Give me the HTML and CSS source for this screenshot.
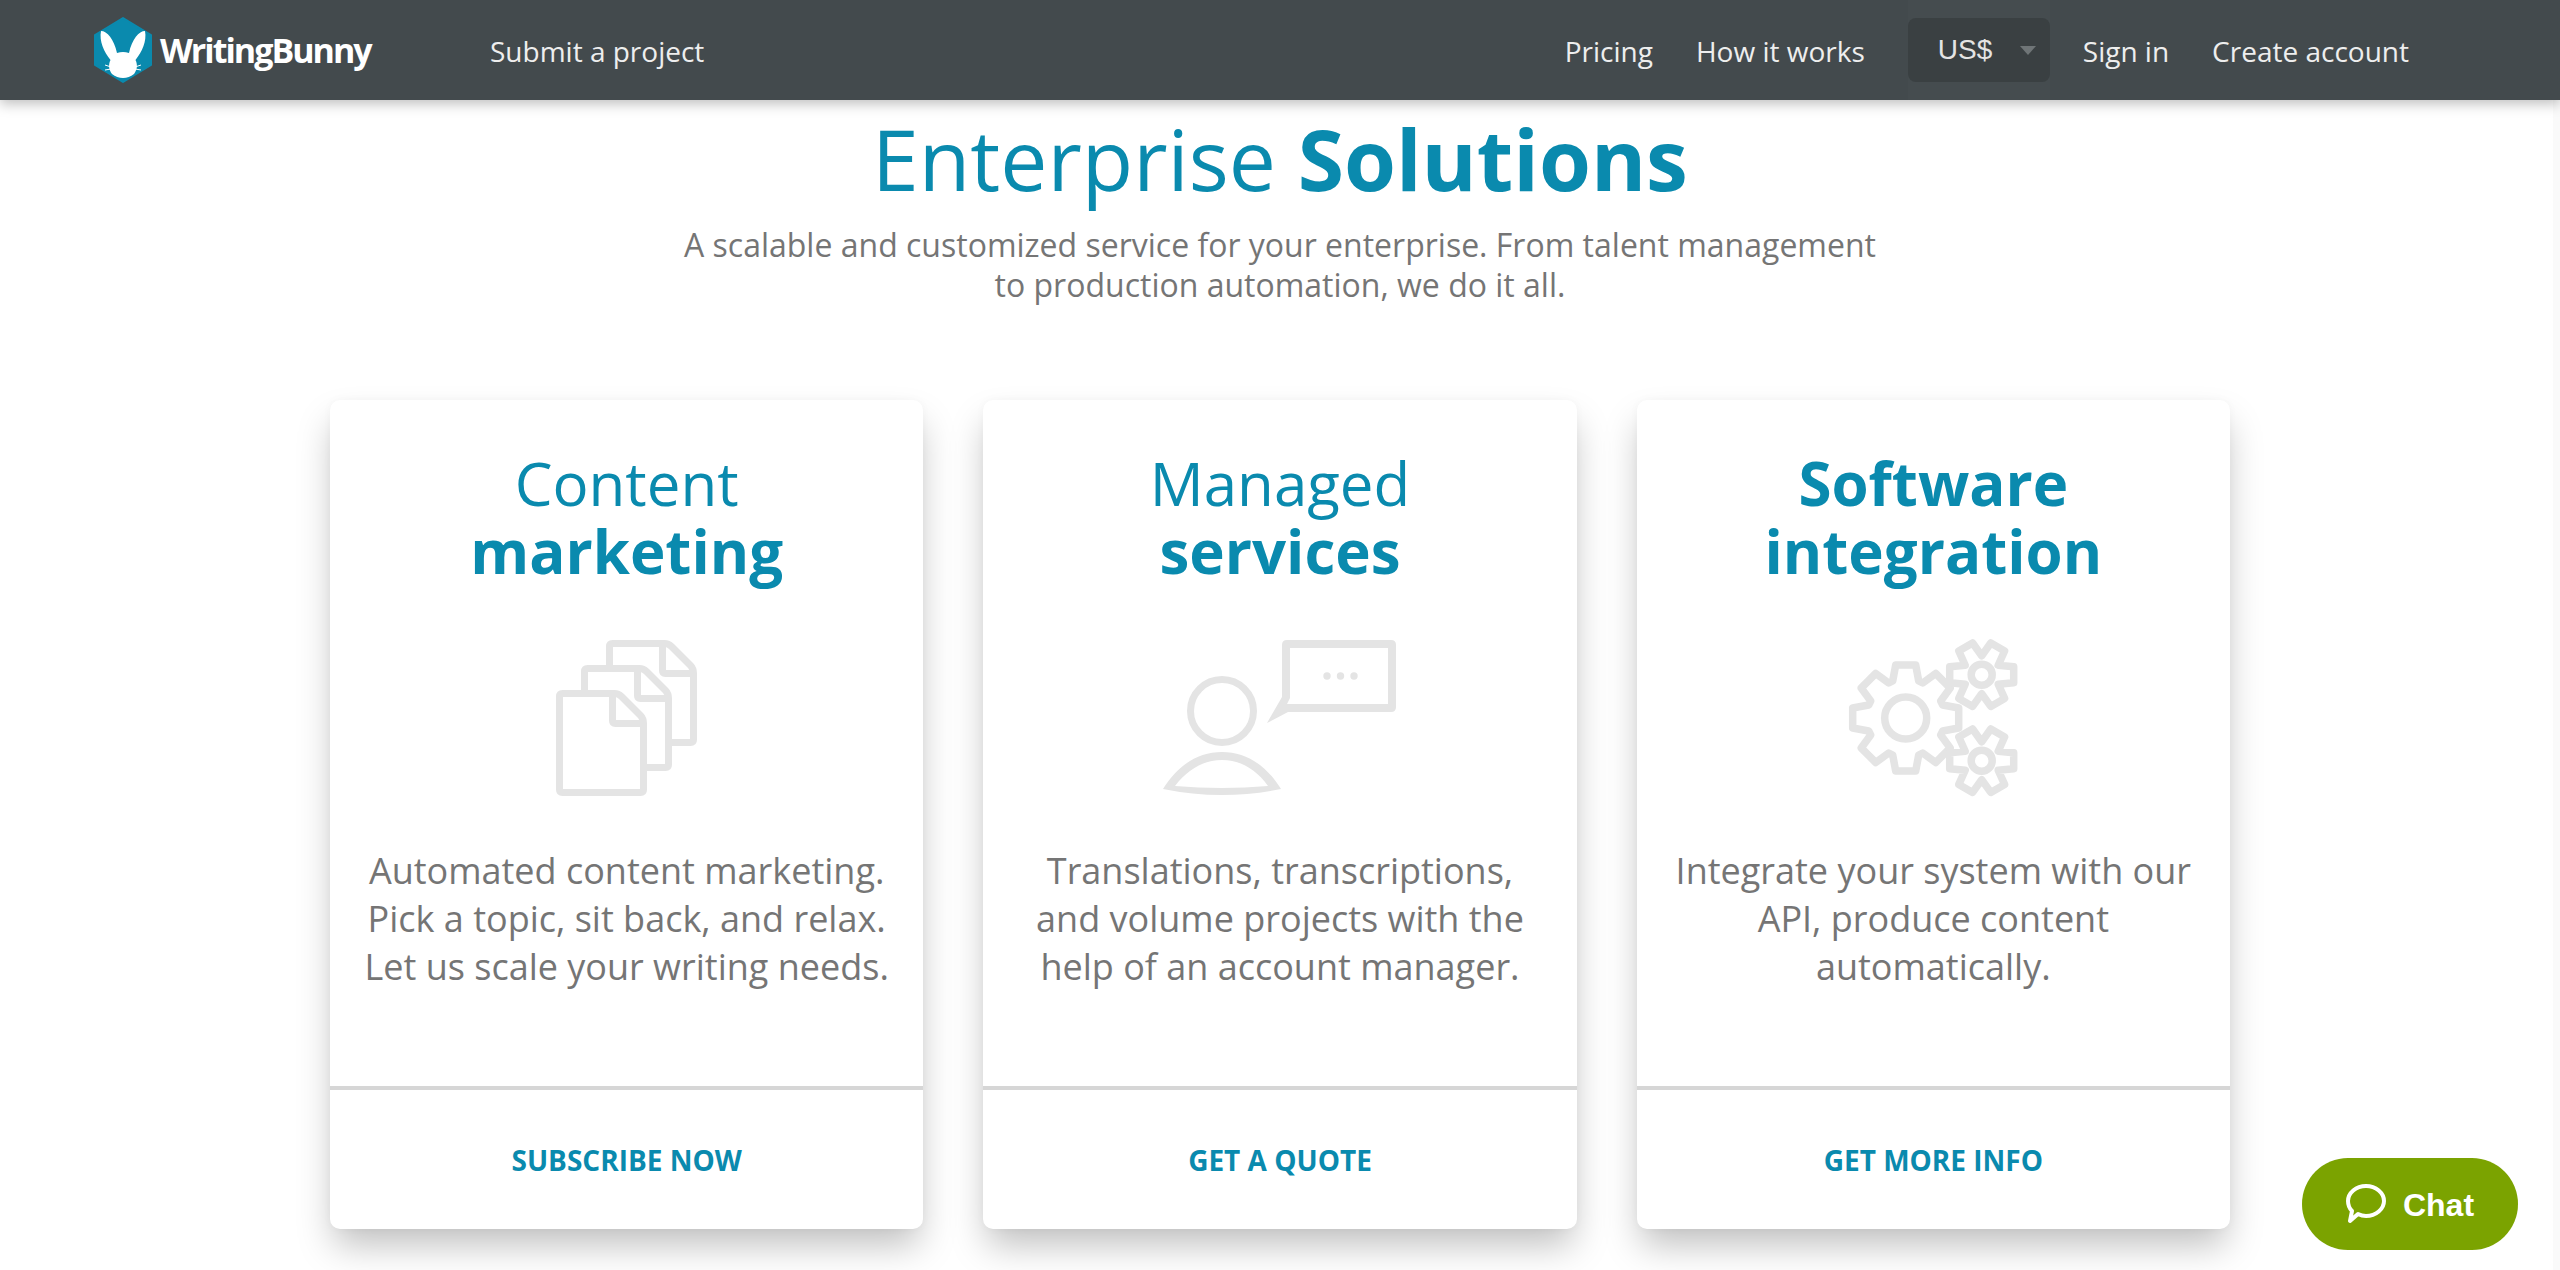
FILE: index.html

```html
<!DOCTYPE html>
<html lang="en">
<head>
  <meta charset="UTF-8" />
  <title>WritingBunny - Enterprise Solutions</title>
  <link rel="stylesheet" href="styles.css">
</head>
<body>
  <header class="topbar">
    <a class="logo" href="#">
      <svg class="logo-mark" viewBox="0 0 58 66" width="58" height="66">
        <path fill="#0a8aae" stroke="#0a8aae" stroke-width="2" stroke-linejoin="round" d="M29 1 L57 18 V48 L29 65 L1 48 V18 Z"/>
        <path fill="#fff" d="M7 14 C13 14 20 22 23 36 Q29 34 35 36 C38 22 45 14 51 14 C53 24 48 35 41.5 43 C44 48 43 53 40 57 Q35 61 29 61 Q23 61 18 57 C15 53 14 48 16.5 43 C10 35 5 24 7 14 Z"/>
        <path fill="none" stroke="#fff" stroke-width="1" d="M11 48 L17 50 M11 53 L17 52 M47 48 L41 50 M47 53 L41 52"/>
      </svg>
      <span class="logo-text">WritingBunny</span>
    </a>
    <a class="nav-link" href="#">Submit a project</a>
    <nav class="nav-right">
      <a class="nav-link" href="#">Pricing</a>
      <a class="nav-link" href="#">How it works</a>
      <div class="currency-col">
        <div class="currency">
          <span>US$</span>
          <i class="caret"></i>
        </div>
      </div>
      <a class="nav-link" href="#">Sign in</a>
      <a class="nav-link" href="#">Create account</a>
    </nav>
  </header>

  <main class="content">
    <h1 class="page-title">Enterprise <b>Solutions</b></h1>
    <p class="page-sub">A scalable and customized service for your enterprise. From talent management<br>to production automation, we do it all.</p>

    <section class="cards">
      <article class="card">
        <div class="card-body">
          <h2 class="card-title">Content<br><b>marketing</b></h2>
          <svg class="card-icon" viewBox="0 0 260 160" width="260" height="160">
            <defs>
              <g id="page">
                <path fill="#fff" d="M3 0 H55 Q59 0 62 3 L81 22 Q84 25 84 30 V96 Q84 99 81 99 H3 Q0 99 0 96 V3 Q0 0 3 0 Z"/>
                <path fill="none" d="M53 0 V27 Q53 30 56 30 H84"/>
              </g>
            </defs>
            <g stroke="#e4e4e4" stroke-width="7" stroke-linejoin="round">
              <use href="#page" x="112.5" y="5.5"/>
              <use href="#page" x="87.5" y="30.5"/>
              <use href="#page" x="62.5" y="55.5"/>
            </g>
          </svg>
          <p class="card-text">Automated content marketing.<br>Pick a topic, sit back, and relax.<br>Let us scale your writing needs.</p>
        </div>
        <a class="card-action" href="#">SUBSCRIBE NOW</a>
      </article>

      <article class="card">
        <div class="card-body">
          <h2 class="card-title">Managed<br><b>services</b></h2>
          <svg class="card-icon" viewBox="0 0 260 160" width="260" height="160">
            <circle cx="72" cy="73" r="31.5" fill="none" stroke="#e4e4e4" stroke-width="7"/>
            <g fill="#e4e4e4" fill-rule="evenodd">
              <path d="M13 151 C28 127 48 114 72 114 C96 114 116 127 131 151 Q72 163 13 151 Z M25 148 C38 131 54 122 72 122 C90 122 106 131 118 148 Q72 152 25 148 Z"/>
              <path d="M137 2 H241 Q246 2 246 7 V69 Q246 74 241 74 H138 L117 85 L132 59 V7 Q132 2 137 2 Z M140 10 V60 L137 66 H238 V10 Z"/>
              <circle cx="177" cy="38" r="3.7"/>
              <circle cx="190.5" cy="38" r="3.7"/>
              <circle cx="204" cy="38" r="3.7"/>
            </g>
          </svg>
          <p class="card-text">Translations, transcriptions,<br>and volume projects with the<br>help of an account manager.</p>
        </div>
        <a class="card-action" href="#">GET A QUOTE</a>
      </article>

      <article class="card">
        <div class="card-body">
          <h2 class="card-title"><b>Software<br>integration</b></h2>
          <svg class="card-icon" viewBox="0 0 260 160" width="260" height="160">
            <defs>
              <path id="gear-big" d="M-10 -53 L10 -53 L13 -37 L17 -35 L30 -44.5 L44.5 -30 L35 -17 L37 -13 L53 -10 L53 10 L37 13 L35 17 L44.5 30 L30 44.5 L17 35 L13 37 L10 53 L-10 53 L-13 37 L-17 35 L-30 44.5 L-44.5 30 L-35 17 L-37 13 L-53 10 L-53 -10 L-37 -13 L-35 -17 L-44.5 -30 L-30 -44.5 L-17 -35 L-13 -37 Z"/>
              <path id="gear-small" d="M16.5 -9.5 L32 -8 L32 8 L16.5 9.5 L22.9 23.7 L9.1 31.7 L0 19 L-9.1 31.7 L-22.9 23.7 L-16.5 9.5 L-32 8 L-32 -8 L-16.5 -9.5 L-22.9 -23.7 L-9.1 -31.7 L0 -19 L9.1 -31.7 L22.9 -23.7 Z"/>
            </defs>
            <g fill="#fff" stroke="#e4e4e4" stroke-width="7.5" stroke-linejoin="round">
              <g transform="translate(102.7 80)"><use href="#gear-big"/><circle r="21"/></g>
              <g transform="translate(178.7 36.7)"><use href="#gear-small"/><circle r="10.5"/></g>
              <g transform="translate(178.7 122.7)"><use href="#gear-small"/><circle r="10.5"/></g>
            </g>
          </svg>
          <p class="card-text">Integrate your system with our<br>API, produce content<br>automatically.</p>
        </div>
        <a class="card-action" href="#">GET MORE INFO</a>
      </article>
    </section>
  </main>

  <div class="scroll-track"></div>

  <button class="chat">
    <svg viewBox="0 0 40 40" width="40" height="40">
      <path fill="none" stroke="#fff" stroke-width="4" stroke-linejoin="round" d="M20 2 C30 2 38 9 38 17 C38 25 30 32 20 32 C17 32 14 31 12 30 L4 37 L6 27 C3 24 2 21 2 17 C2 9 10 2 20 2 Z"/>
    </svg>
    <span class="chat-label">Chat</span>
  </button>
</body>
</html>
```

FILE: styles.css

```css
* { box-sizing: border-box; }
html, body {
  margin: 0;
  padding: 0;
  background: #fff;
  font-family: "Open Sans", sans-serif;
  color: #757575;
  height: 100%;
  overflow: hidden;
}
a { text-decoration: none; color: inherit; }

.topbar {
  height: 100px;
  background: #434a4d;
  box-shadow: 0 4px 12px rgba(0,0,0,0.25);
  display: flex;
  align-items: center;
  padding: 0 151px 0 94px;
  position: relative;
  z-index: 2;
}
.logo {
  display: flex;
  align-items: center;
  gap: 8px;
  width: 396px;
}
.logo-mark { flex: none; }
.logo-text {
  font-size: 34px;
  font-weight: 700;
  letter-spacing: -2px;
  color: #fff;
}
.nav-link {
  padding-top: 2px;
  font-size: 28px;
  font-weight: 400;
  color: #eee;
}
.nav-right {
  margin-left: auto;
  display: flex;
  align-items: center;
  gap: 43px;
}
.currency-col {
  height: 100px;
  margin-right: -10px;
  background: #454c4f;
  display: flex;
  align-items: center;
}
.currency {
  width: 142px;
  height: 64px;
  background: #3a4042;
  border-radius: 8px;
  display: flex;
  align-items: center;
  justify-content: space-between;
  padding: 0 14px 0 30px;
  font-family: "Liberation Sans", sans-serif;
  font-size: 28px;
  color: #e4e4e4;
}
.caret {
  width: 0;
  height: 0;
  border-left: 8px solid transparent;
  border-right: 8px solid transparent;
  border-top: 9px solid #6f7577;
}

.content {
  display: flex;
  flex-direction: column;
  align-items: center;
}
.page-title {
  margin: 14px 0 0;
  font-size: 84px;
  line-height: 90px;
  font-weight: 400;
  color: #0a8aae;
}
.page-title b, .card-title b { font-weight: 700; }
.page-sub {
  margin: 21px 0 0;
  font-size: 32px;
  line-height: 40px;
  font-weight: 400;
  text-align: center;
}

.cards {
  width: 1900px;
  margin-top: 95px;
  display: flex;
  gap: 60px;
}
.card {
  flex: 1;
  height: 829px;
  background: #fff;
  border-radius: 10px;
  box-shadow: 0 20px 36px -4px rgba(0,0,0,0.25), 0 0 10px rgba(0,0,0,0.03);
  display: flex;
  flex-direction: column;
}
.card-body {
  height: 690px;
  border-bottom: 4px solid #d6d6d6;
  display: flex;
  flex-direction: column;
  align-items: center;
  padding-top: 49px;
}
.card-title {
  margin: 0;
  font-size: 60px;
  line-height: 68px;
  font-weight: 400;
  text-align: center;
  color: #0a8aae;
}
.card-icon { margin-top: 53px; }
.card-text {
  margin: 49px 0 0;
  font-size: 36px;
  line-height: 48px;
  text-align: center;
}
.card-action {
  flex: 1;
  display: flex;
  align-items: center;
  justify-content: center;
  font-size: 28px;
  font-weight: 700;
  color: #0a8aae;
}

.scroll-track {
  position: absolute;
  top: 100px;
  right: 0;
  bottom: 0;
  width: 7px;
  background: #fafafa;
}

.chat {
  position: absolute;
  left: 2302px;
  top: 1158px;
  width: 216px;
  height: 92px;
  border: none;
  border-radius: 46px;
  background: #7ba300;
  color: #fff;
  display: flex;
  align-items: center;
  justify-content: center;
  gap: 17px;
  font-family: "Liberation Sans", sans-serif;
  font-size: 32px;
  font-weight: 700;
}
.chat-label { padding-top: 2px; }
```
